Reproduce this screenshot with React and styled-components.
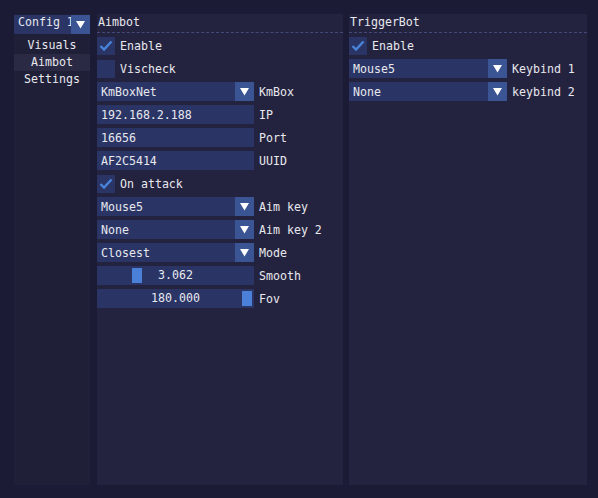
import styled, { createGlobalStyle } from "styled-components"

const Global = createGlobalStyle`
    html, body {
        margin: 0;
        padding: 0;
        background: #1b1b36;
    }
    body {
        font-family: "DejaVu Sans Mono", "Liberation Mono", monospace;
        font-size: 11.6px;
        color: #e8e8ee;
    }
`

const Window = styled.div`
    width: 598px;
    height: 498px;
    box-sizing: border-box;
    padding: 14px 11px 13px 14px;
    display: flex;
    gap: 7px;
    background: #1b1b36;
`

const Sidebar = styled.div`
    width: 76px;
    background: #1f1f38;
    display: flex;
    flex-direction: column;
`

const Panel = styled.div`
    width: ${(p) => p.$width}px;
    background: #24233f;
    display: flex;
    flex-direction: column;
    gap: 4px;
`

const Header = styled.div`
    height: 18px;
    line-height: 16px;
    padding-left: 1px;
    border-bottom: 1px dashed #434a78;
    margin-bottom: -1px;
`

const Row = styled.div`
    display: flex;
    align-items: center;
    height: 19px;
    gap: 5px;
    white-space: nowrap;
`

const Frame = styled.div`
    width: ${(p) => p.$width}px;
    height: 19px;
    background: #2a3566;
    display: flex;
    align-items: center;
    position: relative;
    overflow: hidden;
    flex-shrink: 0;
`

const FrameText = styled.span`
    flex: 1;
    padding-left: 4px;
    overflow: hidden;
    white-space: nowrap;
`

const ArrowBtn = styled.div`
    width: 19px;
    height: 19px;
    background: #3b5493;
    display: flex;
    align-items: center;
    justify-content: center;
    flex-shrink: 0;
`

const Box = styled.div`
    width: 18px;
    height: 18px;
    background: #2a3566;
    display: flex;
    align-items: center;
    justify-content: center;
`

const SliderText = styled.span`
    position: absolute;
    inset: 0;
    text-align: center;
    line-height: 19px;
`

const Grab = styled.div`
    position: absolute;
    top: 2px;
    width: 10px;
    height: 15px;
    background: #4b80d8;
`

const SideCombo = styled.div`
    height: 19px;
    display: flex;
    background: #2a3566;
    margin-top: 1px;
    margin-bottom: 3px;
`

const SideItem = styled.div`
    height: 17px;
    line-height: 17px;
    text-align: center;
    background: ${(p) => (p.$active ? "#2a2a45" : "transparent")};
`

function Arrow() {
    return (
        <svg width="9" height="8" viewBox="0 0 9 8">
            <polygon points="0,0 9,0 4.5,7.5" fill="#ffffff" />
        </svg>
    )
}

function Checkbox({ label, checked }) {
    return (
        <Row>
            <Box>
                {checked && (
                    <svg width="14" height="12" viewBox="0 0 14 12">
                        <polyline points="1.5,6 5,9.5 12.5,1.5" fill="none" stroke="#4a84da" strokeWidth="2.4" />
                    </svg>
                )}
            </Box>
            {label}
        </Row>
    )
}

function Combo({ value, label, width = 157 }) {
    return (
        <Row>
            <Frame $width={width}>
                <FrameText>{value}</FrameText>
                <ArrowBtn>
                    <Arrow />
                </ArrowBtn>
            </Frame>
            {label}
        </Row>
    )
}

function Input({ value, label }) {
    return (
        <Row>
            <Frame $width={157}>
                <FrameText>{value}</FrameText>
            </Frame>
            {label}
        </Row>
    )
}

function Slider({ value, label, pos }) {
    return (
        <Row>
            <Frame $width={157}>
                <Grab style={{ left: pos }} />
                <SliderText>{value}</SliderText>
            </Frame>
            {label}
        </Row>
    )
}

export default function App() {
    return (
        <>
            <Global />
            <Window>
                <Sidebar>
                    <SideCombo>
                        <FrameText>Config 1</FrameText>
                        <ArrowBtn>
                            <Arrow />
                        </ArrowBtn>
                    </SideCombo>
                    <SideItem>Visuals</SideItem>
                    <SideItem $active>Aimbot</SideItem>
                    <SideItem>Settings</SideItem>
                </Sidebar>
                <Panel $width={246}>
                    <Header>Aimbot</Header>
                    <Checkbox label="Enable" checked />
                    <Checkbox label="Vischeck" />
                    <Combo value="KmBoxNet" label="KmBox" />
                    <Input value="192.168.2.188" label="IP" />
                    <Input value="16656" label="Port" />
                    <Input value="AF2C5414" label="UUID" />
                    <Checkbox label="On attack" checked />
                    <Combo value="Mouse5" label="Aim key" />
                    <Combo value="None" label="Aim key 2" />
                    <Combo value="Closest" label="Mode" />
                    <Slider value="3.062" label="Smooth" pos={35} />
                    <Slider value="180.000" label="Fov" pos={145} />
                </Panel>
                <Panel $width={238} style={{ marginLeft: -1 }}>
                    <Header>TriggerBot</Header>
                    <Checkbox label="Enable" checked />
                    <Combo value="Mouse5" label="Keybind 1" width={158} />
                    <Combo value="None" label="keybind 2" width={158} />
                </Panel>
            </Window>
        </>
    )
}
